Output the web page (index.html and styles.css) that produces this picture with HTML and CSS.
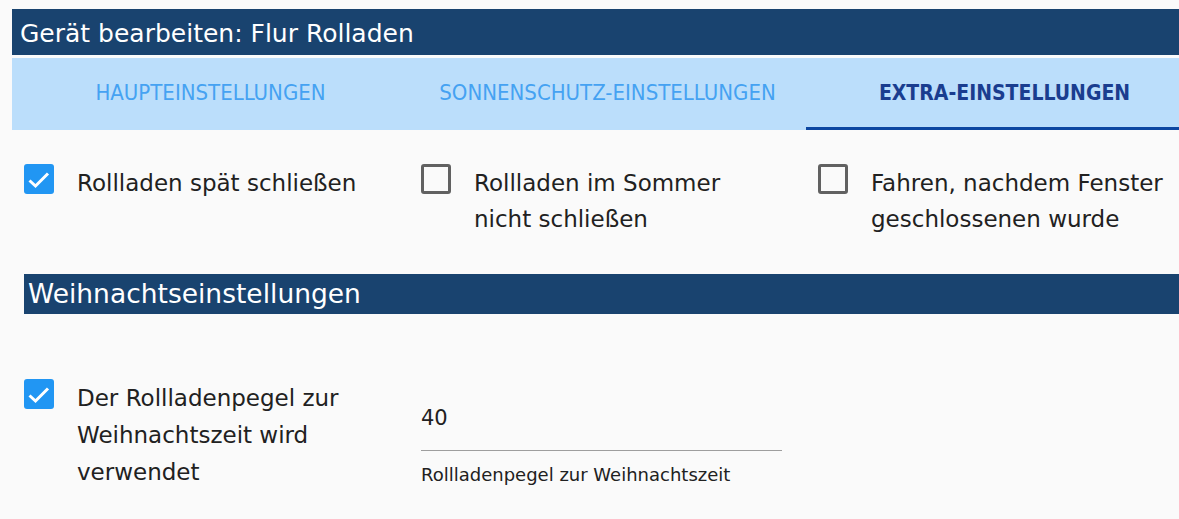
FILE: index.html
```html
<!DOCTYPE html>
<html lang="de">
<head>
  <meta charset="UTF-8" />
  <meta name="viewport" content="width=device-width, initial-scale=1.0" />
  <title>Gerät bearbeiten</title>
  <link rel="stylesheet" href="styles.css">
</head>
<body>
  <main class="dialog">
    <h1 class="dialog-title">Gerät bearbeiten: Flur Rolladen</h1>

    <nav class="tabs">
      <div class="tab">Haupteinstellungen</div>
      <div class="tab">Sonnenschutz-Einstellungen</div>
      <div class="tab active">Extra-Einstellungen</div>
    </nav>

    <section class="row">
      <label class="option">
        <span class="box checked">
          <svg viewBox="0 0 30 30"><path d="M5.5 16.5l6 5.5L24 9.5" /></svg>
        </span>
        <span class="option-text">Rollladen spät schließen</span>
      </label>
      <label class="option">
        <span class="box"></span>
        <span class="option-text">Rollladen im Sommer nicht schließen</span>
      </label>
      <label class="option">
        <span class="box"></span>
        <span class="option-text">Fahren, nachdem Fenster geschlossenen wurde</span>
      </label>
    </section>

    <h2 class="section-title">Weihnachtseinstellungen</h2>

    <section class="row row-xmas">
      <label class="option">
        <span class="box checked">
          <svg viewBox="0 0 30 30"><path d="M5.5 16.5l6 5.5L24 9.5" /></svg>
        </span>
        <span class="option-text">Der Rollladenpegel zur Weihnachtszeit wird verwendet</span>
      </label>
      <div class="field">
        <div class="field-input">40</div>
        <div class="field-help">Rollladenpegel zur Weihnachtszeit</div>
      </div>
    </section>
  </main>
</body>
</html>
```

FILE: styles.css
```css
body {
  margin: 0;
  padding: 0;
  background: #fafafa;
  font-family: "DejaVu Sans", "Open Sans", sans-serif;
  color: #212121;
  overflow: hidden;
}

.dialog {
  width: 1191px;
  padding: 9px 0 0 12px;
}

.dialog-title {
  margin: 0;
  height: 43px;
  line-height: 43px;
  padding: 3px 0 0 8px;
  background: #19436f;
  color: white;
  font-size: 25px;
  font-weight: normal;
}

.tabs {
  margin-top: 3px;
  display: grid;
  grid-template-columns: repeat(3, 397px);
  height: 72px;
  background: #bbdefb;
}

.tab {
  display: flex;
  align-items: center;
  justify-content: center;
  text-transform: uppercase;
  font-family: "DejaVu Sans Condensed", "DejaVu Sans", sans-serif;
  font-size: 22px;
  color: #45a2f2;
  box-sizing: border-box;
  border-bottom: 3px solid transparent;
}

.tab.active {
  color: #1a3d8f;
  font-weight: bold;
  font-size: 21px;
  border-bottom-color: #0d47a1;
}

.row {
  display: grid;
  grid-template-columns: repeat(3, 397px);
  margin-top: 34px;
}

.option {
  display: flex;
  align-items: flex-start;
  padding: 0 12px;
}

.box {
  flex: none;
  width: 30px;
  height: 30px;
  box-sizing: border-box;
  border: 3px solid #616161;
  border-radius: 3px;
  margin-right: 23px;
}

.box.checked {
  background: #2196f3;
  border: none;
}

.box svg {
  display: block;
  width: 30px;
  height: 30px;
  fill: none;
  stroke: white;
  stroke-width: 3;
}

.option-text {
  width: 300px;
  font-size: 23px;
  line-height: 36px;
  margin-top: 1px;
}

.section-title {
  margin: 37px 0 0 12px;
  height: 40px;
  line-height: 40px;
  padding-left: 4px;
  background: #19436f;
  color: white;
  font-size: 26.5px;
  font-weight: normal;
}

.row-xmas {
  margin-top: 65px;
}

.row-xmas .option-text {
  line-height: 37px;
}

.field {
  padding: 0 12px;
  width: 361px;
}

.field-input {
  font-size: 21px;
  height: 50px;
  box-sizing: border-box;
  border-bottom: 1px solid #9e9e9e;
  margin-top: 22px;
  line-height: 26px;
  padding-top: 4px;
}

.field-help {
  font-size: 18px;
  margin-top: 13px;
}
```
